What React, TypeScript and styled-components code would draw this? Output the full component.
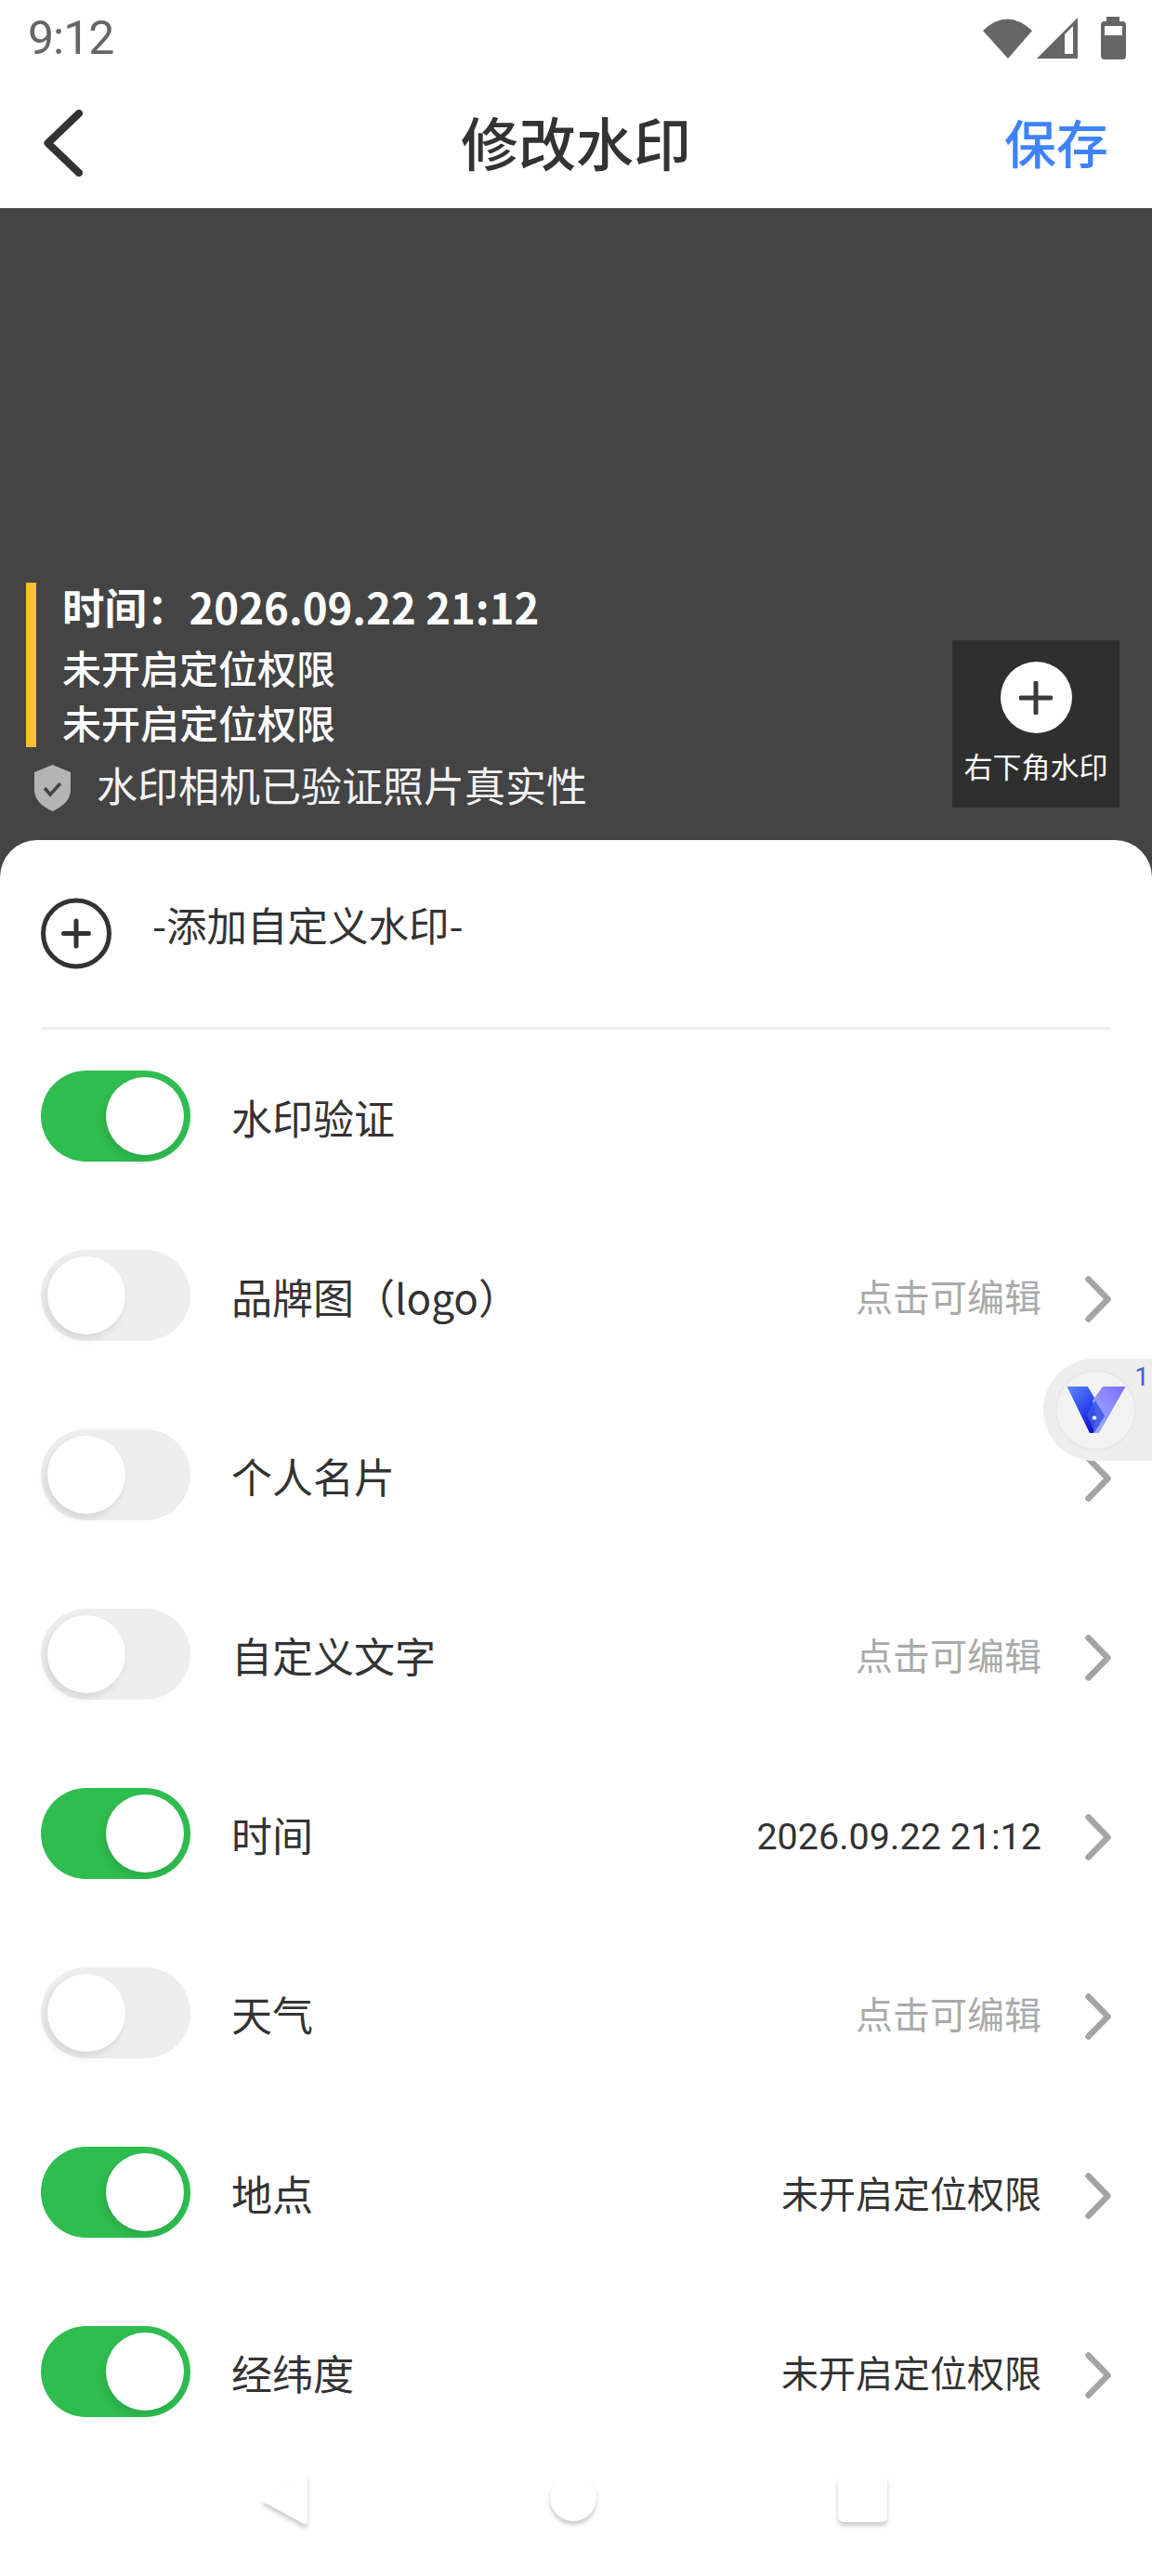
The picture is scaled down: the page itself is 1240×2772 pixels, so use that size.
import * as React from "react";
import styled, { createGlobalStyle } from "styled-components";

const GlobalStyle = createGlobalStyle`
  html, body {
    margin: 0;
    padding: 0;
    background: #fff;
  }
  * {
    box-sizing: border-box;
  }
`;

const sans = `Roboto, "Noto Sans CJK SC", sans-serif`;
const cjk = `"Noto Sans CJK SC", "Noto Sans", sans-serif`;

// ----------------------------------------------------------------------
// Header
// ----------------------------------------------------------------------

const Page = styled.div`
  position: relative;
  width: 1240px;
  height: 2772px;
  overflow: hidden;
  background: #fff;
  font-family: ${sans};
  color: #333;
`;

const StatusBar = styled.div`
  display: flex;
  align-items: center;
  height: 96px;
  padding: 0 28px 14px 30px;
`;

const Clock = styled.span`
  font-size: 50px;
  line-height: 56px;
  letter-spacing: -1px;
  color: #666;
`;

const StatusIcons = styled.div`
  display: flex;
  align-items: center;
  margin-left: auto;
`;

const TopBar = styled.header`
  display: grid;
  grid-template-columns: 1fr auto 1fr;
  align-items: center;
  height: 128px;
  padding: 0 47px 12px 47px;
`;

const Title = styled.h1`
  margin: 0 0 5px;
  font-family: ${cjk};
  font-size: 62px;
  line-height: 72px;
  font-weight: 500;
  color: #333;
`;

const SaveLabel = styled.span`
  justify-self: end;
  margin-bottom: 5px;
  font-family: ${cjk};
  font-size: 56px;
  line-height: 64px;
  font-weight: 500;
  color: #3f83f8;
`;

// ----------------------------------------------------------------------
// Preview with the watermark
// ----------------------------------------------------------------------

const Preview = styled.section`
  display: flex;
  align-items: flex-end;
  justify-content: space-between;
  height: 720px;
  padding: 0 35px 71px 28px;
  background: #444;
  color: #fff;
`;

const Watermark = styled.div`
  font-family: ${cjk};
`;

const MarkLines = styled.div`
  display: flex;
  flex-direction: column;
  height: 177px;
  border-left: 11px solid #fcc02e;
  padding-left: 28px;
`;

const MarkTime = styled.div`
  margin-top: -3px;
  margin-bottom: 13px;
  font-size: 45.5px;
  line-height: 56px;
  font-weight: 700;
`;

const MarkLine = styled.div`
  font-size: 42px;
  line-height: 50px;
  font-weight: 500;
  & + & {
    margin-top: 9px;
  }
`;

const Verified = styled.div`
  display: flex;
  align-items: center;
  gap: 28px;
  height: 50px;
  margin: 19px 0 0 9px;
  font-size: 44px;
  color: #f2f2f2;
`;

const VerifiedText = styled.span`
  margin-bottom: 9px;
`;

const CornerBox = styled.div`
  display: flex;
  flex-direction: column;
  align-items: center;
  width: 180px;
  height: 180px;
  margin-bottom: 4px;
  padding-top: 23px;
  background: #2f2f2f;
`;

const CornerPlus = styled.div`
  display: flex;
  align-items: center;
  justify-content: center;
  width: 77px;
  height: 77px;
  border-radius: 50%;
  background: #fff;
`;

const CornerLabel = styled.span`
  margin-top: 15px;
  font-family: ${cjk};
  font-size: 31px;
  line-height: 40px;
  white-space: nowrap;
`;

// ----------------------------------------------------------------------
// Bottom sheet with the settings
// ----------------------------------------------------------------------

const Sheet = styled.section`
  position: relative;
  margin-top: -40px;
  padding: 0 44px;
  background: #fff;
  border-radius: 40px 40px 0 0;
`;

const AddRow = styled.div`
  display: flex;
  align-items: center;
  gap: 44px;
  height: 201px;
  padding-bottom: 1px;
`;

const AddLabel = styled.span`
  margin-bottom: 18px;
  font-family: ${cjk};
  font-size: 43.5px;
  line-height: 56px;
  color: #333;
`;

const Divider = styled.div`
  height: 3px;
  background: #eee;
`;

const Rows = styled.div`
  margin-top: -3px;
`;

const Row = styled.div`
  display: flex;
  align-items: center;
  height: 193px;
`;

const Toggle = styled.div<{ $on?: boolean }>`
  display: flex;
  flex: none;
  align-items: center;
  justify-content: ${({ $on }) => ($on ? "flex-end" : "flex-start")};
  width: 161px;
  height: 98px;
  margin-bottom: 1px;
  padding: 0 7px;
  border-radius: 49px;
  background: ${({ $on }) => ($on ? "#2fbd50" : "#eee")};
`;

const Knob = styled.div`
  width: 84px;
  height: 84px;
  border-radius: 50%;
  background: #fff;
  box-shadow: -3px 5px 9px rgba(0, 0, 0, 0.1);
`;

const RowBody = styled.div`
  display: flex;
  flex: 1;
  align-items: center;
  margin-left: 44px;
  padding-top: 6px;
`;

const RowLabel = styled.span`
  margin-bottom: 5px;
  font-family: ${cjk};
  font-size: 44px;
  line-height: 56px;
  color: #333;
`;

const RowValue = styled.span<{ $muted?: boolean; $latin?: boolean }>`
  margin-left: auto;
  font-size: ${({ $latin }) => ($latin ? "39.500px" : "40px")};
  line-height: 56px;
  color: ${({ $muted }) => ($muted ? "#aaa" : "#333")};
`;

const RowArrow = styled.svg`
  flex: none;
  width: 28px;
  height: 50px;
  margin-left: 47px;
`;

const RowEnd = styled.div`
  margin-left: auto;
`;

const NavBar = styled.nav`
  display: flex;
  align-items: flex-start;
  gap: 252px;
  height: 123px;
  padding: 14px 0 0 231px;
`;

const NavIcon = styled.svg`
  flex: none;
  width: 60px;
  height: 60px;
  overflow: visible;
  filter: drop-shadow(0 4px 2px rgba(0, 0, 0, 0.2));
`;

// ----------------------------------------------------------------------
// Floating assistant button
// ----------------------------------------------------------------------

const Floating = styled.div`
  position: absolute;
  top: 1462px;
  right: 0;
  display: flex;
  align-items: center;
  width: 117px;
  height: 110px;
  padding-left: 13px;
  border-radius: 55px 0 0 55px;
  background: #eee;
`;

const FloatingCircle = styled.div`
  display: flex;
  align-items: center;
  justify-content: center;
  width: 87px;
  height: 87px;
  border: 2px solid #e8e8e8;
  border-radius: 50%;
  background: #f3f3f3;
`;

const FloatingCount = styled.span`
  position: absolute;
  top: 4px;
  right: 3px;
  font-size: 28px;
  line-height: 32px;
  color: #3b5fe0;
`;

// ----------------------------------------------------------------------
// Drawings
// ----------------------------------------------------------------------

function Chevron() {
  return (
    <RowArrow viewBox="0 0 28 50">
      <path d="M3.500 3.500 L24.500 25 L3.500 46.500" fill="none" stroke="#a4a4a4" strokeWidth="6.500" strokeLinecap="round" strokeLinejoin="round" />
    </RowArrow>
  );
}

function PlusCircle() {
  return (
    <svg width="76" height="77" viewBox="0 0 76 77">
      <circle cx="38" cy="38.5" r="35.500" fill="none" stroke="#333" strokeWidth="5" />
      <path d="M38 25 V52 M24.500 38.500 H51.500" stroke="#333" strokeWidth="5" strokeLinecap="round" />
    </svg>
  );
}

function VLogo() {
  return (
    <svg width="64" height="50" viewBox="18.500 29 63 49">
      <defs>
        <linearGradient id="vleft" x1="0" y1="0" x2="0.7" y2="1">
          <stop offset="0" stopColor="#5f86ff" />
          <stop offset="0.55" stopColor="#2b45ee" />
          <stop offset="1" stopColor="#0a0ec4" />
        </linearGradient>
        <linearGradient id="vright" x1="1" y1="0" x2="0" y2="1">
          <stop offset="0" stopColor="#7a6dff" />
          <stop offset="1" stopColor="#a3b2ff" />
        </linearGradient>
      </defs>
      <polygon points="19,29 41,29 58,58 47,78 43,78" fill="url(#vleft)" />
      <polygon points="57,29 81,29 53,78 47,78 50,60 46,44" fill="url(#vright)" />
      <polygon points="49,44 59,60 48,78 40,58" fill="#3c55e8" opacity="0.85" />
      <circle cx="48" cy="62" r="2.200" fill="#fff" />
    </svg>
  );
}

const rows = [
  { label: "水印验证", on: true },
  { label: "品牌图（logo）", value: "点击可编辑", muted: true },
  { label: "个人名片", arrowOnly: true },
  { label: "自定义文字", value: "点击可编辑", muted: true },
  { label: "时间", value: "2026.09.22 21:12", on: true, latin: true },
  { label: "天气", value: "点击可编辑", muted: true },
  { label: "地点", value: "未开启定位权限", on: true },
  { label: "经纬度", value: "未开启定位权限", on: true },
];

export default function App() {
  return (
    <Page>
      <GlobalStyle />
      <StatusBar>
        <Clock>9:12</Clock>
        <StatusIcons>
          <svg width="154" height="46" viewBox="0 0 154 46">
            <path d="M0 15 Q26 -10 53 15 L27 45 Z" fill="#666" />
            <path d="M58 45 L102 1 V45 Z" fill="#666" />
            <path d="M88 19 L97 10 V40 H88 Z" fill="#fff" />
            <path d="M133 0 H147 V5 H150 Q154 5 154 9 V42 Q154 46 150 46 H131 Q127 46 127 42 V9 Q127 5 131 5 H133 Z" fill="#666" />
            <rect x="131" y="10" width="19" height="10" fill="#fff" />
          </svg>
        </StatusIcons>
      </StatusBar>
      <TopBar>
        <svg width="42" height="72" viewBox="0 0 42 72">
          <path d="M38 4 L4.500 36 L38 68" fill="none" stroke="#333" strokeWidth="8" strokeLinecap="round" strokeLinejoin="round" />
        </svg>
        <Title>修改水印</Title>
        <SaveLabel>保存</SaveLabel>
      </TopBar>

      <Preview>
        <Watermark>
          <MarkLines>
            <MarkTime>时间：2026.09.22 21:12</MarkTime>
            <MarkLine>未开启定位权限</MarkLine>
            <MarkLine>未开启定位权限</MarkLine>
          </MarkLines>
          <Verified>
            <svg width="39" height="50" viewBox="0 0 39 50">
              <path d="M19.500 0 L39 8 V27 Q39 41 19.500 50 Q0 41 0 27 V8 Z" fill="#b4b4b4" />
              <path d="M11 25 L17 32 L28 20" fill="none" stroke="#444" strokeWidth="3.500" />
            </svg>
            <VerifiedText>水印相机已验证照片真实性</VerifiedText>
          </Verified>
        </Watermark>
        <CornerBox>
          <CornerPlus>
            <svg width="36" height="36" viewBox="0 0 36 36">
              <path d="M18 2 V34 M2 18 H34" stroke="#3a3a3a" strokeWidth="5" strokeLinecap="round" />
            </svg>
          </CornerPlus>
          <CornerLabel>右下角水印</CornerLabel>
        </CornerBox>
      </Preview>

      <Sheet>
        <AddRow>
          <PlusCircle />
          <AddLabel>-添加自定义水印-</AddLabel>
        </AddRow>
        <Divider />
        <Rows>
          {rows.map((row) => (
            <Row key={row.label}>
              <Toggle $on={row.on}>
                <Knob />
              </Toggle>
              <RowBody>
                <RowLabel>{row.label}</RowLabel>
                {row.value && (
                  <RowValue $muted={row.muted} $latin={row.latin}>
                    {row.value}
                  </RowValue>
                )}
                {row.arrowOnly && <RowEnd />}
                {row.label !== "水印验证" && <Chevron />}
              </RowBody>
            </Row>
          ))}
        </Rows>
        <NavBar>
          <NavIcon viewBox="0 0 60 60">
            <path d="M54 0 Q56 0 56 3 V51 Q56 54 52 53 L6 28 L54 0 Z" fill="#fff" />
          </NavIcon>
          <NavIcon viewBox="0 0 60 60">
            <circle cx="30" cy="25" r="25" fill="#fff" />
          </NavIcon>
          <NavIcon viewBox="0 0 60 60">
            <rect x="3" y="0" width="53" height="51" rx="6" fill="#fff" />
          </NavIcon>
        </NavBar>
      </Sheet>

      <Floating>
        <FloatingCircle>
          <VLogo />
        </FloatingCircle>
        <FloatingCount>1</FloatingCount>
      </Floating>
    </Page>
  );
}
